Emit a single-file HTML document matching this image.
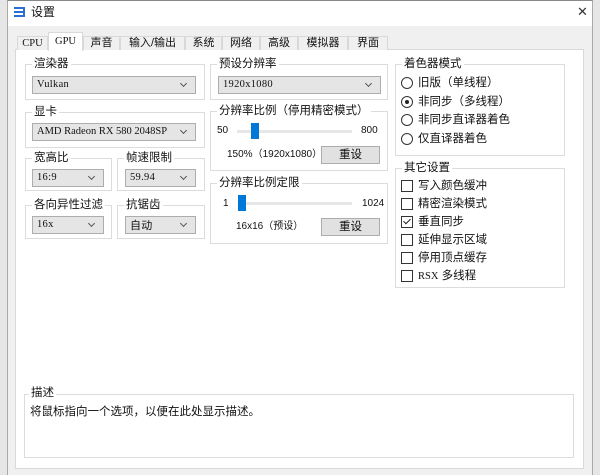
<!DOCTYPE html><html><head><meta charset="utf-8"><style>
*{box-sizing:border-box;margin:0;padding:0}
body{width:600px;height:475px;background:#e6e6e6;font-family:"Liberation Sans","Noto Sans CJK SC",sans-serif;font-size:11px;color:#111;position:relative;overflow:hidden}
.a{position:absolute}
#win{left:7px;top:0;width:586px;height:475px;background:#f0f0f0;border-left:1px solid #aaa;border-right:1px solid #aaa}
#title{left:7px;top:0;width:586px;height:26px;background:#fff;border-left:1px solid #aaa;border-right:1px solid #aaa;border-top:1px solid #888}
.tab{position:absolute;top:36px;height:14px;background:#f0f0f0;border:1px solid #d9d9d9;border-bottom:none;font-size:11px;text-align:center;line-height:13px}
.tab.s{top:32px;height:19px;background:#fff;z-index:3}
#panel{left:15px;top:49px;width:569px;height:420px;background:#fff;border:1px solid #d9d9d9}
.g{position:absolute;border:1px solid #dcdcdc}
.g>.l{position:absolute;top:-9px;left:6px;background:#fff;padding:0 2px;font-size:11.5px;line-height:16px}
.cb{position:absolute;height:18px;background:#e5e5e5;border:1px solid #adadad;font-family:"Liberation Serif","Noto Sans CJK SC",serif;font-size:10.5px;line-height:16px;padding-left:4px;letter-spacing:0.3px;overflow:hidden}
.cb:after{content:"";position:absolute;right:9px;top:4px;width:4px;height:4px;border-right:1px solid #555;border-bottom:1px solid #555;transform:rotate(45deg)}
.btn{position:absolute;height:18px;width:59px;background:#e1e1e1;border:1px solid #adadad;text-align:center;line-height:16px;font-size:11.5px}
.tr{position:absolute;height:3px;background:#e7e7e7}
.th{position:absolute;width:8px;height:16px;background:#0078d7}
.rd{position:absolute;width:12px;height:12px;border:1px solid #333;border-radius:50%;background:#fff}
.ck{position:absolute;width:12px;height:12px;border:1px solid #333;background:#fff}
.t{position:absolute;font-size:11.5px;line-height:14px;white-space:nowrap}
</style></head><body>
<div class="a" id="win"></div>
<div class="a" id="title"></div>
<div class="a" style="left:14px;top:7px;width:11px;height:10px;border:2px solid #2a6fd1;border-left:none"></div>
<div class="a" style="left:14px;top:11px;width:9px;height:2px;background:#2a6fd1"></div>
<div class="t" style="left:31px;top:5px;font-size:12px">设置</div>
<div class="t" style="left:577px;top:5px;font-size:13px;color:#333">✕</div>
<div class="a" id="panel"></div>
<div class="tab" style="left:17px;width:31px;font-family:'Liberation Serif';font-size:10.5px">CPU</div>
<div class="tab s" style="left:48px;width:35px;font-family:'Liberation Serif';font-size:10.5px;line-height:18px">GPU</div>
<div class="tab" style="left:83px;width:37px">声音</div>
<div class="tab" style="left:120px;width:65px">输入/输出</div>
<div class="tab" style="left:185px;width:37px">系统</div>
<div class="tab" style="left:222px;width:38px">网络</div>
<div class="tab" style="left:260px;width:38px">高级</div>
<div class="tab" style="left:298px;width:50px">模拟器</div>
<div class="tab" style="left:348px;width:40px">界面</div>

<div class="g" style="left:25px;top:64px;width:180px;height:36px"><span class="l">渲染器</span></div>
<div class="cb" style="left:32px;top:76px;width:164px">Vulkan</div>
<div class="g" style="left:25px;top:112px;width:180px;height:36px"><span class="l">显卡</span></div>
<div class="cb" style="left:32px;top:123px;width:164px;letter-spacing:0">AMD Radeon RX 580 2048SP</div>
<div class="g" style="left:25px;top:158px;width:87px;height:33px"><span class="l">宽高比</span></div>
<div class="cb" style="left:32px;top:169px;width:72px">16:9</div>
<div class="g" style="left:117px;top:158px;width:88px;height:33px"><span class="l">帧速限制</span></div>
<div class="cb" style="left:125px;top:169px;width:71px">59.94</div>
<div class="g" style="left:25px;top:205px;width:87px;height:34px"><span class="l">各向异性过滤</span></div>
<div class="cb" style="left:32px;top:216px;width:72px">16x</div>
<div class="g" style="left:117px;top:205px;width:88px;height:34px"><span class="l">抗锯齿</span></div>
<div class="cb" style="left:125px;top:216px;width:71px;font-family:'Noto Sans CJK SC';font-size:11px">自动</div>

<div class="g" style="left:210px;top:64px;width:178px;height:36px"><span class="l">预设分辨率</span></div>
<div class="cb" style="left:218px;top:76px;width:163px">1920x1080</div>
<div class="g" style="left:210px;top:111px;width:178px;height:60px"><span class="l">分辨率比例（停用精密模式）</span></div>
<div class="t" style="left:217px;top:124px;font-size:10px">50</div>
<div class="tr" style="left:237px;top:130px;width:115px"></div>
<div class="th" style="left:251px;top:123px"></div>
<div class="t" style="left:361px;top:124px;font-size:10px">800</div>
<div class="t" style="left:227px;top:148px;font-size:10px">150%（1920x1080）</div>
<div class="btn" style="left:321px;top:146px">重设</div>
<div class="g" style="left:210px;top:183px;width:178px;height:61px"><span class="l">分辨率比例定限</span></div>
<div class="t" style="left:223px;top:197px;font-size:10px">1</div>
<div class="tr" style="left:238px;top:202px;width:114px"></div>
<div class="th" style="left:238px;top:195px"></div>
<div class="t" style="left:362px;top:197px;font-size:10px">1024</div>
<div class="t" style="left:236px;top:220px;font-size:10px">16x16（预设）</div>
<div class="btn" style="left:321px;top:218px">重设</div>

<div class="g" style="left:395px;top:64px;width:170px;height:92px"><span class="l">着色器模式</span></div>
<div class="rd" style="left:401px;top:77px"></div><div class="t" style="left:418px;top:76px">旧版（单线程）</div>
<div class="rd" style="left:401px;top:96px"></div><div class="a" style="left:405px;top:100px;width:4px;height:4px;border-radius:50%;background:#222"></div><div class="t" style="left:418px;top:95px">非同步（多线程）</div>
<div class="rd" style="left:401px;top:114px"></div><div class="t" style="left:418px;top:113px">非同步直译器着色</div>
<div class="rd" style="left:401px;top:133px"></div><div class="t" style="left:418px;top:132px">仅直译器着色</div>

<div class="g" style="left:395px;top:168px;width:170px;height:120px"><span class="l">其它设置</span></div>
<div class="ck" style="left:401px;top:180px"></div><div class="t" style="left:418px;top:179px">写入颜色缓冲</div>
<div class="ck" style="left:401px;top:198px"></div><div class="t" style="left:418px;top:197px">精密渲染模式</div>
<div class="ck" style="left:401px;top:216px"></div><div class="a" style="left:405px;top:217px;width:4px;height:7px;border-right:1px solid #222;border-bottom:1px solid #222;transform:rotate(45deg)"></div><div class="t" style="left:418px;top:215px">垂直同步</div>
<div class="ck" style="left:401px;top:234px"></div><div class="t" style="left:418px;top:233px">延伸显示区域</div>
<div class="ck" style="left:401px;top:252px"></div><div class="t" style="left:418px;top:251px">停用顶点缓存</div>
<div class="ck" style="left:401px;top:270px"></div><div class="t" style="left:418px;top:269px"><span style="font-family:'Liberation Serif';font-size:10.5px">RSX</span> 多线程</div>

<div class="g" style="left:24px;top:394px;width:550px;height:64px"><span class="l" style="left:4px;top:-10px">描述</span></div>
<div class="t" style="left:30px;top:405px">将鼠标指向一个选项，以便在此处显示描述。</div>
</body></html>
